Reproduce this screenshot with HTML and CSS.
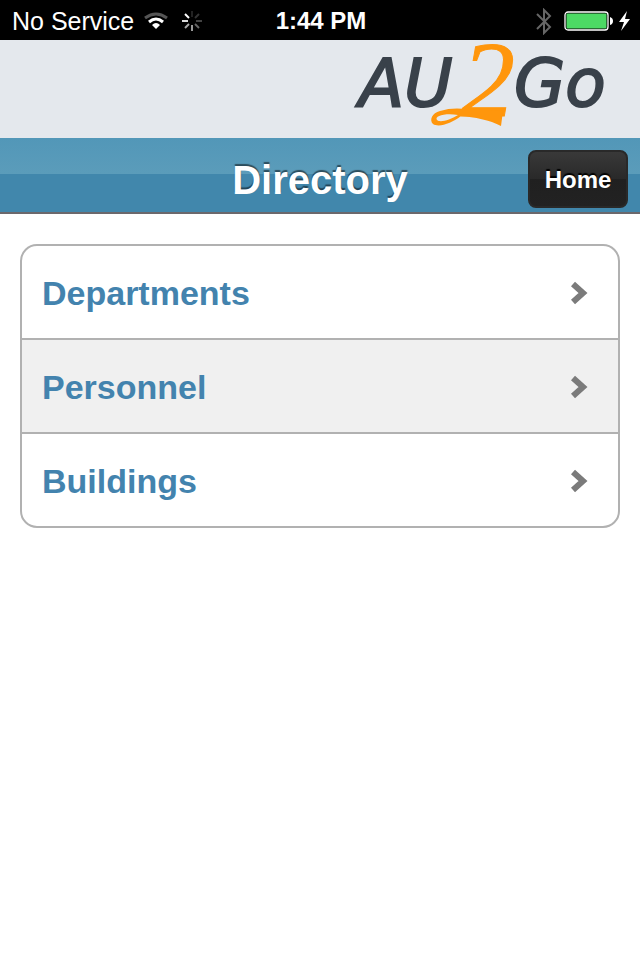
FILE: index.html
```html
<!DOCTYPE html>
<html lang="en">
<head>
<meta charset="utf-8">
<meta name="viewport" content="width=device-width, initial-scale=1">
<title>Directory</title>
<link rel="stylesheet" href="styles.css">
</head>
<body>
<div class="status">
  <div class="status-side">
    <span>No Service</span>
    <svg class="wifi" width="24" height="18" viewBox="0 0 24 18" fill="none" stroke-width="3">
      <path d="M1 6Q12-2 23 6" stroke="#555"/>
      <path d="M5 10Q12 4 19 10" stroke="#fff"/>
      <path d="M8 13Q12 9 16 13L12 17Z" fill="#fff"/>
    </svg>
    <svg class="spinner" width="20" height="20" viewBox="0 0 20 20" stroke-width="2">
      <path d="M10 0v6" stroke="#222"/>
      <path d="M17 3l-4 4" stroke="#333"/>
      <path d="M20 10h-6" stroke="#444"/>
      <path d="M17 17l-4-4" stroke="#666"/>
      <path d="M10 20v-6" stroke="#999"/>
      <path d="M3 17l4-4" stroke="#aaa"/>
      <path d="M0 10h6" stroke="#ddd"/>
      <path d="M3 3l4 4" stroke="#fff"/>
    </svg>
  </div>
  <time class="clock">1:44 PM</time>
  <div class="status-side status-end">
    <svg width="16" height="27" viewBox="0 0 16 27" fill="none" stroke="#666" stroke-width="2">
      <path d="M1 6L14 19L8 25V2L14 8L1 21"/>
    </svg>
    <svg class="battery" width="49" height="20" viewBox="0 0 49 20">
      <rect x="1" y="1" width="43" height="18" rx="3" fill="none" stroke="#fff" stroke-width="1.3"/>
      <rect x="2.500" y="2.500" width="40" height="15" rx="1" fill="#4cd964"/>
      <path d="M46 6Q49 7 49 10T46 14Z" fill="#fff"/>
    </svg>
    <svg width="11" height="20" viewBox="0 0 11 20">
      <path d="M8 0L0 11H5L2 20L11 8H6Z" fill="#fff"/>
    </svg>
  </div>
</div>
<header class="brand">
  <svg class="logo" width="256" height="98" viewBox="0 0 256 98" role="img" aria-label="AU2Go">
    <g class="logo-word">
      <text x="7" y="66">AU</text>
      <text x="162" y="66">Go</text>
    </g>
    <text class="logo-two" x="109" y="76">2</text>
    <path class="logo-swash" d="M151 71C138 70 128 70 116 69C105 68 97 68 88 71C80 73 77 80 81 84C87 88 100 83 109 76C122 77 138 80 149 86ZM106 75C98 80 88 83 85 80C82 76 93 73 106 75Z"/>
  </svg>
</header>
<div class="toolbar">
  <h1 class="title">Directory</h1>
  <button class="home" type="button">Home</button>
</div>
<main class="content">
  <ul class="list">
    <li class="item"><a class="link" href="#departments">Departments<svg class="chevron" width="20" height="26" viewBox="0 0 20 26"><path d="M3 4L13 13L3 22"/></svg></a></li>
    <li class="item"><a class="link" href="#personnel">Personnel<svg class="chevron" width="20" height="26" viewBox="0 0 20 26"><path d="M3 4L13 13L3 22"/></svg></a></li>
    <li class="item"><a class="link" href="#buildings">Buildings<svg class="chevron" width="20" height="26" viewBox="0 0 20 26"><path d="M3 4L13 13L3 22"/></svg></a></li>
  </ul>
</main>
</body>
</html>
```
FILE: styles.css
```css
* { box-sizing: border-box; }
body {
  margin: 0;
  background: #fff;
  font-family: "Liberation Sans", Arial, sans-serif;
}
.status {
  display: grid;
  grid-template-columns: 1fr auto 1fr;
  align-items: center;
  height: 40px;
  padding: 0 10px 0 12px;
  background: #000;
  color: #fff;
  font-size: 25px;
  line-height: 42px;
}
.status-side { display: flex; align-items: center; height: 40px; }
.status-end { justify-content: flex-end; }
.wifi { margin-left: 10px; }
.spinner { margin-left: 14px; }
.clock { font-size: 24px; font-weight: bold; }
.battery { margin: 0 6px 0 12px; }
.brand {
  display: flex;
  justify-content: flex-end;
  padding-right: 32px;
  background: #e4e8ed;
}
.logo { display: block; overflow: visible; }
.logo-word {
  fill: #39414a;
  stroke: #39414a;
  stroke-width: 2;
  font: italic 66px "DejaVu Sans", sans-serif;
}
.logo-two {
  fill: #ff960c;
  stroke: #ff960c;
  stroke-width: 1px;
  font: italic 108px "Liberation Serif", serif;
}
.logo-swash { fill: #ff960c; fill-rule: evenodd; }
.toolbar {
  display: grid;
  grid-template-columns: 1fr auto 1fr;
  align-items: center;
  height: 76px;
  padding: 8px 12px 0;
  border-bottom: 2px solid #6b686c;
  background: linear-gradient(#5297b8, #5b9cba 48%, #4187ac 49%, #4187ac);
  color: #fff;
}
.title {
  grid-column: 2;
  margin: 0;
  font-size: 40px;
  line-height: 50px;
  padding-top: 2px;
  text-shadow: 0 -2px 1px rgba(0, 0, 0, .5);
}
.home {
  justify-self: end;
  width: 100px;
  height: 58px;
  padding: 2px 0 0;
  border: 2px solid #292929;
  border-radius: 8px;
  background: linear-gradient(#393939, #292929 50%, #202020 51%, #222);
  color: #fff;
  font: bold 24px "Liberation Sans", Arial, sans-serif;
  text-shadow: 0 -2px 1px #000;
}
.content { padding: 30px 20px; }
.list {
  margin: 0;
  padding: 0;
  overflow: hidden;
  border: 2px solid #b1b1b1;
  border-radius: 17px;
  list-style: none;
}
.item + .item { border-top: 2px solid #b1b1b1; }
.item:nth-child(even) { background: #f0f0f0; }
.link {
  display: flex;
  align-items: center;
  justify-content: space-between;
  height: 92px;
  padding: 2px 28px 0 20px;
  color: #4383ae;
  font-size: 34px;
  font-weight: bold;
  text-decoration: none;
}
.chevron {
  fill: none;
  stroke: #7b7b7b;
  stroke-width: 6;
}
```
